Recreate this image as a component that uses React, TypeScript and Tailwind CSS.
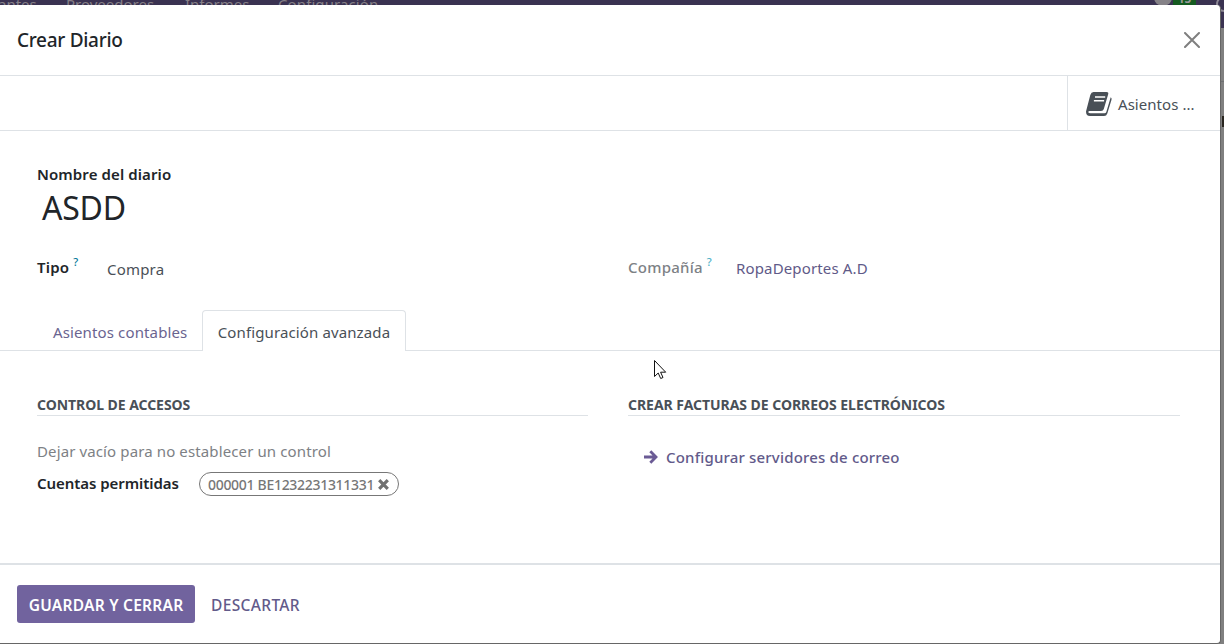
const help = "relative -top-[3px] ml-1 pt-[3px] text-[11px] font-medium leading-none";

function MenuBar() {
  return (
    <div className="flex h-7 overflow-hidden bg-[#3a3251] text-[15px] leading-5 text-[#868087]">
      <div className="relative -top-[6px] flex w-full">
        <span className="-ml-[2px] w-[68px]">antes</span>
        <span className="w-[119px]">Proveedores</span>
        <span className="w-[93px]">Informes</span>
        <span className="tracking-[0.1px]">Configuración</span>
        <span className="-mt-[5px] ml-auto mr-[1px] h-[17px] w-[18px] self-start rounded-full bg-[#858287]" />
        <span className="-mt-[6px] mr-[20px] flex h-[18px] w-[23px] justify-center self-start bg-[#155b21] pt-[1px] text-[12px] font-bold leading-5 text-[#999]">15</span>
        <span className="-mr-[8px] mt-[2px] h-[16px] w-[16px] rounded-full border-2 border-[#8b8693]" />
      </div>
    </div>
  );
}

export default function App() {
  return (
    <div className="relative h-[644px] w-[1224px] overflow-hidden bg-[#808080] font-['Noto_Sans','Open_Sans',sans-serif] text-[15px] leading-[22px] text-[#495057]">
      <MenuBar />
      <div className="absolute right-0 top-[81px] h-px w-[3px] bg-[#6d6f71]" />
      <div className="absolute right-0 top-[116px] h-[11px] w-[2px] bg-[#29251f]" />
      <div role="dialog" className="absolute left-0 top-[5px] flex h-[639px] w-[1221px] flex-col rounded-r-[4px] border-b border-r border-[#666] bg-white">
        <header className="flex h-[71px] shrink-0 items-center justify-between border-b border-[#dee2e6] pl-[17px] pr-[20px]">
          <h4 className="text-[19px] font-medium tracking-[-0.3px] text-[#212529]">Crear Diario</h4>
          <svg width="16" height="16" viewBox="0 0 16 16" stroke="#7f7f7f" strokeWidth="2" strokeLinecap="round"><path d="M1 1 15 15M15 1 1 15" /></svg>
        </header>
        <div className="flex h-[55px] shrink-0 justify-end border-b border-[#dee2e6]">
          <button className="flex w-[153px] items-center border-l border-[#dee2e6] pl-[18px]">
            <BookIcon />
            <span className="ml-[6px] mt-[2px] tracking-[0.05px]">Asientos ...</span>
          </button>
        </div>
        <main className="flex grow flex-col">
          <div className="flex flex-col px-[37px] pt-[32px]">
            <label className="font-semibold tracking-[0.1px] text-[#212529]">Nombre del diario</label>
            <div className="mt-[1px] pl-[5px] text-[32px] leading-[44px] tracking-[-0.2px] text-[#212529]">ASDD</div>
          </div>
          <div className="mt-[26px] flex h-[24px] px-[37px]">
            <div className="flex w-[591px]">
              <div className="flex w-[70px] font-semibold tracking-[0.2px] text-[#212529]">Tipo<span className={help + " text-[#01799b]"}>?</span></div>
              <span className="mt-[2px] tracking-[0.2px]">Compra</span>
            </div>
            <div className="flex w-[108px] font-medium tracking-[0.25px] text-[#7d8185]">Compañía<span className={help + " text-[#50b2c8]"}>?</span></div>
            <span className="mt-[1px] tracking-[0.15px] text-[#5f5a88]">RopaDeportes A.D</span>
          </div>
          <nav className="mt-[30px] flex h-[41px] border-b border-[#dee2e6] pl-[37px]">
            <button className="w-[165px] pl-4 pt-[3px] text-left tracking-[0.13px] text-[#6a6490]">Asientos contables</button>
            <button className="-mb-px w-[204px] rounded-t-[4px] border border-b-0 border-[#dee2e6] bg-white pb-px pt-[2px] tracking-[0.12px]">Configuración avanzada</button>
          </nav>
          <div className="flex gap-10 pl-[37px] pr-10 pt-[43px]">
            <section className="flex w-[551px] flex-col">
              <h5 className="h-[22px] border-b border-[#dee2e6] text-[14px] font-bold tracking-[-0.05px]">CONTROL DE ACCESOS</h5>
              <p className="mt-[24px] tracking-[0.12px] text-[#7d8185]">Dejar vacío para no establecer un control</p>
              <div className="mt-[10px] flex items-center">
                <label className="-mt-[2px] w-[162px] font-semibold tracking-[-0.06px] text-[#212529]">Cuentas permitidas</label>
                <span className="flex h-6 w-[200px] items-center rounded-full border border-[#777] pl-[8px] text-[14px] font-medium tracking-[-0.3px] text-[#777]">
                  <span className="mt-px">000001 BE1232231311331</span>
                  <svg className="ml-[4px] mt-px" width="11" height="11" viewBox="0 0 11 11" stroke="#707070" strokeWidth="3.2"><path d="M1.2 1.2 9.8 9.8M9.8 1.2 1.2 9.8" /></svg>
                </span>
              </div>
            </section>
            <section className="flex w-[552px] flex-col">
              <h5 className="h-[22px] border-b border-[#dee2e6] text-[14px] font-bold tracking-[-0.04px]">CREAR FACTURAS DE CORREOS ELECTRÓNICOS</h5>
              <a className="mt-[30px] flex items-center pl-4 font-medium tracking-[0.18px] text-[#625a8a]">
                <svg className="mr-[8px]" width="14" height="14" viewBox="0 0 14 14" fill="none" stroke="#6b5b95" strokeWidth="2.8"><path d="M0 7h12M6.300 1.200 12 7 6.300 12.800" /></svg>
                Configurar servidores de correo
              </a>
            </section>
          </div>
        </main>
        <footer className="flex h-[80px] shrink-0 items-center border-t-2 border-[#dee2e6] pl-[17px] text-[15.5px]">
          <button className="h-[38px] w-[178px] rounded-[3px] bg-[#71639e] pt-[2px] font-semibold tracking-[0.25px] text-white">GUARDAR Y CERRAR</button>
          <button className="ml-[16px] pt-[2px] font-medium tracking-[0.35px] text-[#625a8a]">DESCARTAR</button>
        </footer>
      </div>
      <svg className="absolute left-[654px] top-[360px]" width="13" height="20" viewBox="0 0 13 20"><path d="M.5.5v16l3.7-3.5 2.500 5.500 2.300-1-2.400-5.300h5.100z" fill="white" stroke="#111" /></svg>
    </div>
  );
}

function BookIcon() {
  return (
    <svg className="mt-px" width="26" height="24" viewBox="0 0 26 24">
      <path d="M7.500 0H20.500Q22.800 0 22.200 2.200L17.800 17Q17.200 19 15 19H3.500Q2.300 19 2.300 20.200 2.600 21.300 4.500 21.300H18.500Q19.800 21.300 20.300 20L24.700 5.300Q26 6 25.500 7.700L21.300 21.500Q20.500 24 18 24H4Q0 24 0 19.500L4.300 3Q5.200 0 7.500 0Z" fill="#495057" />
      <path d="M9 5H19.200M7.900 8.800H18.100" stroke="white" strokeWidth="1.500" />
    </svg>
  );
}
